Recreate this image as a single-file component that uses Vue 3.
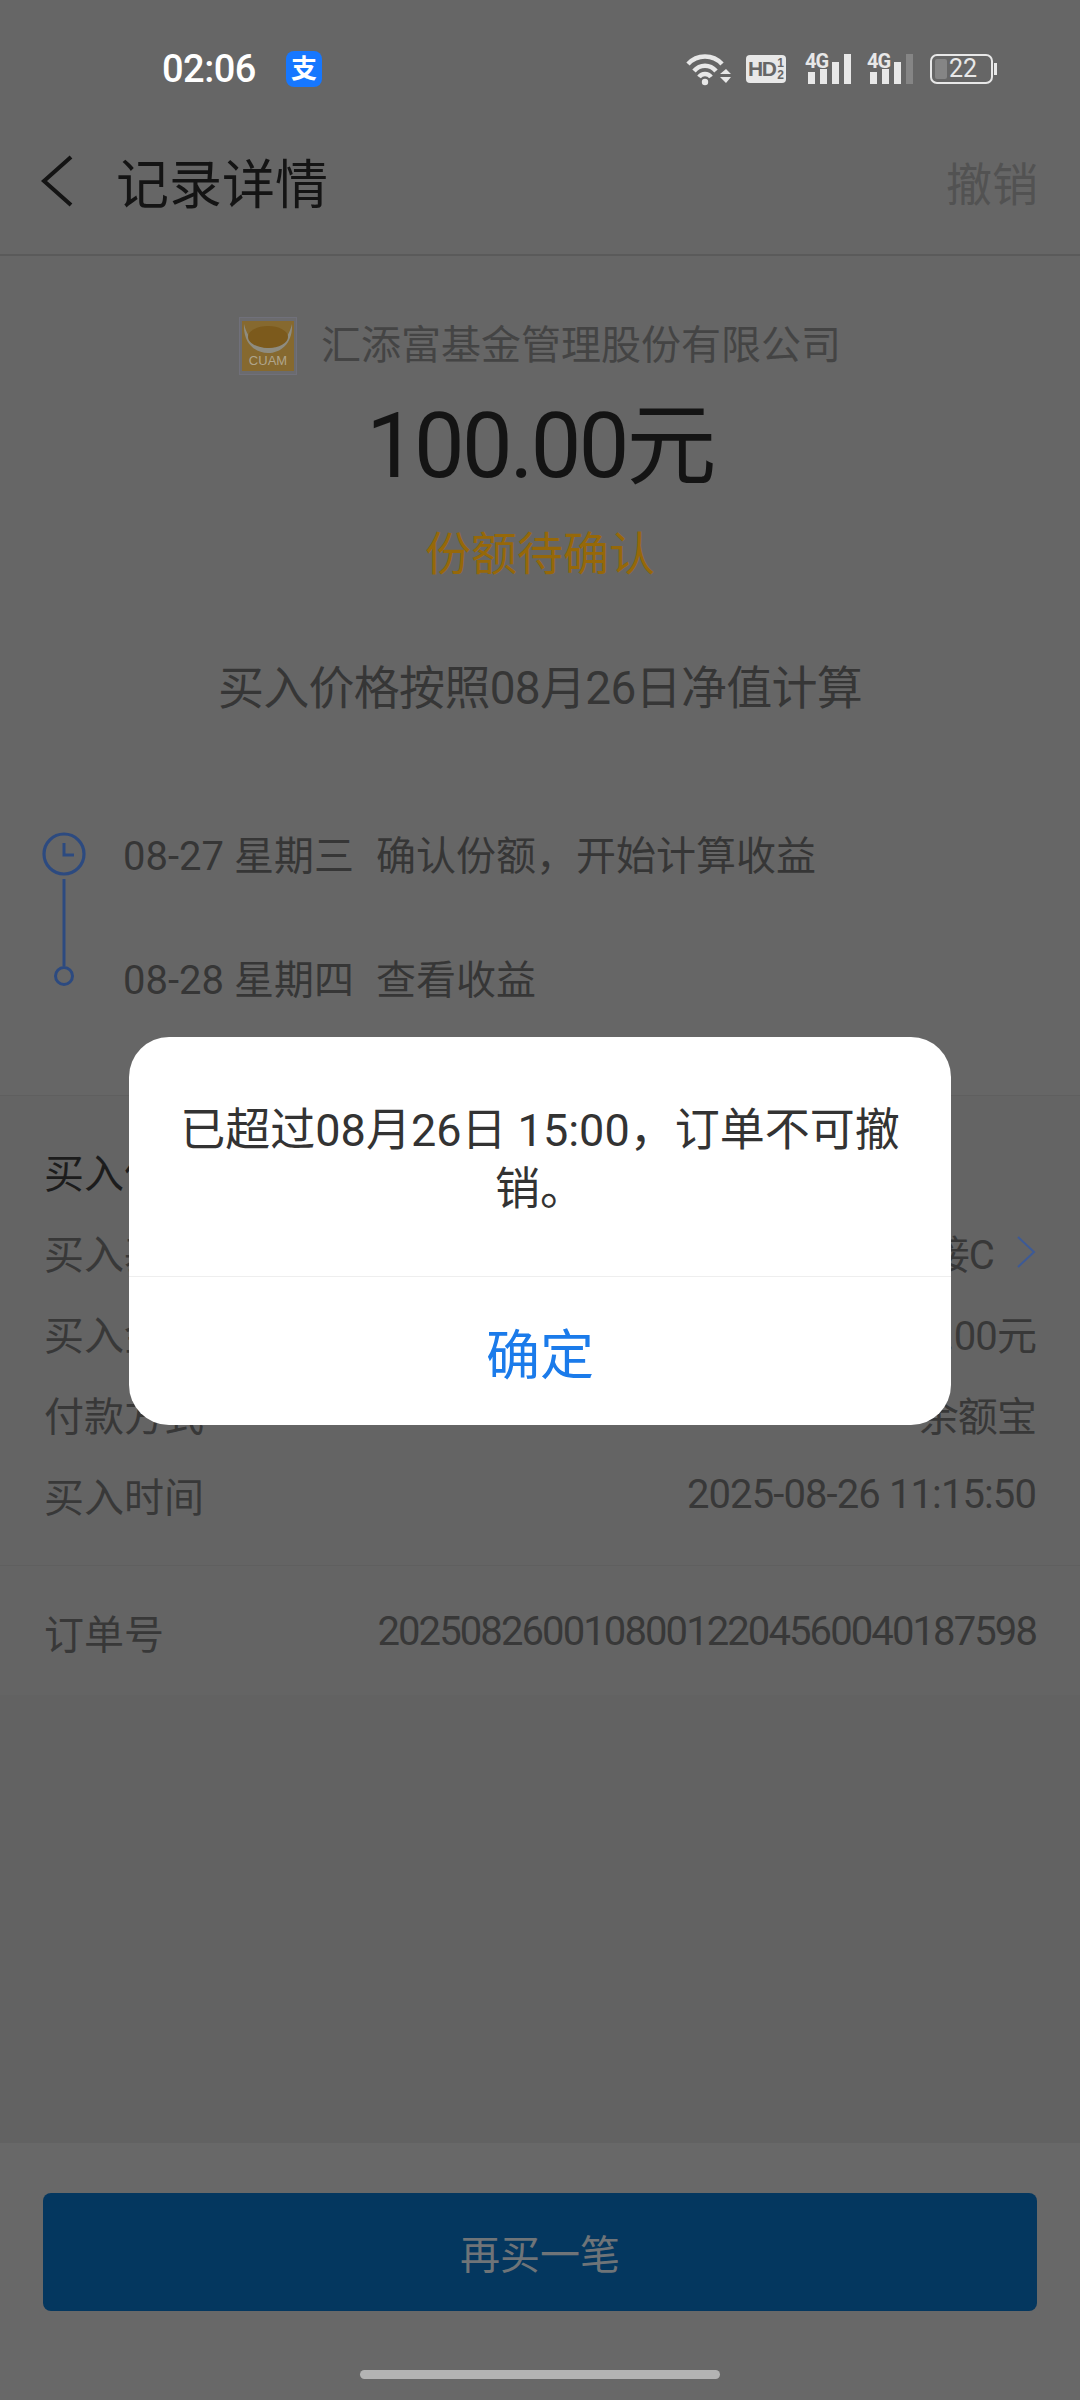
<template>
  <div class="page">
    <div class="status-bar">
      <span class="time">02:06</span>
      <span class="alipay-icon">支</span>
      <div class="status-icons">
        <svg class="wifi" width="46" height="34" viewBox="0 0 46 34">
          <path d="M2 12 C11 2 27 2 36 12" fill="none" stroke="#e8e8e8" stroke-width="4.5" />
          <path d="M8 19 C14 12 24 12 30 19" fill="none" stroke="#e8e8e8" stroke-width="4.5" />
          <path d="M13 25 C16 21 22 21 25 25" fill="none" stroke="#e8e8e8" stroke-width="4.5" />
          <circle cx="19" cy="30" r="3.2" fill="#e8e8e8" />
          <path d="M34 22 L40 17 L45 22 Z M34 25 L45 25 L40 31 Z" fill="#e8e8e8" />
        </svg>
        <div class="hd-badge"><span class="hd">HD</span><span class="hd-num"><i>1</i><i>2</i></span></div>
        <div class="signal">
          <span class="net">4G</span>
          <span class="bar" style="height: 12px"></span>
          <span class="bar" style="height: 15px"></span>
          <span class="bar" style="height: 22px"></span>
          <span class="bar" style="height: 30px"></span>
        </div>
        <div class="signal">
          <span class="net">4G</span>
          <span class="bar" style="height: 12px"></span>
          <span class="bar" style="height: 15px"></span>
          <span class="bar" style="height: 22px"></span>
          <span class="bar off" style="height: 30px"></span>
        </div>
        <div class="battery">
          <div class="battery-body"><span class="battery-fill"></span><span class="battery-num">22</span></div>
          <span class="battery-nub"></span>
        </div>
      </div>
    </div>

    <div class="nav">
      <svg class="back" width="34" height="52" viewBox="0 0 34 52">
        <path d="M31 2 L4 26 L31 50" fill="none" stroke="#141414" stroke-width="4" />
      </svg>
      <span class="nav-title">记录详情</span>
      <span class="nav-action">撤销</span>
    </div>

    <div class="summary">
      <div class="company">
        <svg class="logo" width="58" height="58" viewBox="0 0 58 58">
          <rect x="0.5" y="0.5" width="57" height="57" fill="#6b6b6e" stroke="#70707a" />
          <rect x="3" y="4" width="52" height="50" fill="#86692f" />
          <path d="M5 7 C4 26 16 36 29 36 C42 36 54 26 53 7 C50 20 41 31 29 31 C17 31 8 20 5 7 Z" fill="#8e8c80" />
          <ellipse cx="29" cy="20" rx="20" ry="11" fill="#7c5a1c" />
          <text x="29" y="48" text-anchor="middle" class="logo-text">CUAM</text>
        </svg>
        <span>汇添富基金管理股份有限公司</span>
      </div>
      <div class="amount">100.00元</div>
      <div class="state">份额待确认</div>
      <div class="price-note">买入价格按照08月26日净值计算</div>
    </div>

    <div class="timeline">
      <div class="track">
        <svg width="44" height="156" viewBox="0 0 44 156">
          <circle cx="22" cy="22" r="20" fill="none" stroke="#2c4a80" stroke-width="3.2" />
          <path d="M22 11 V23 H32" fill="none" stroke="#2c4a80" stroke-width="3" />
          <path d="M22 47 V134" fill="none" stroke="#2c4a80" stroke-width="3" />
          <circle cx="22" cy="144" r="8.5" fill="none" stroke="#2c4a80" stroke-width="3" />
        </svg>
      </div>
      <div class="steps">
        <div class="step" v-for="step in steps" :key="step.date">
          <span class="step-date">{{ step.date }}</span>
          <span class="step-text">{{ step.text }}</span>
        </div>
      </div>
    </div>

    <div class="section info">
      <div class="info-title">买入信息</div>
      <div class="row" v-for="row in rows" :key="row.label">
        <span class="row-label">{{ row.label }}</span>
        <span class="row-value">
          {{ row.value }}
          <svg v-if="row.link" class="more" width="20" height="32" viewBox="0 0 20 32">
            <path d="M2 1 L18 16 L2 31" fill="none" stroke="#3d5a96" stroke-width="2" />
          </svg>
        </span>
      </div>
    </div>

    <div class="section order">
      <span class="row-label">订单号</span>
      <span class="row-value">20250826001080012204560040187598</span>
    </div>

    <div class="spacer"></div>

    <div class="footer">
      <button class="buy-again">再买一笔</button>
      <div class="home-bar"></div>
    </div>

    <div class="modal-overlay">
      <div class="modal">
        <div class="modal-text">已超过08月26日 15:00，订单不可撤销。</div>
        <div class="modal-btn">确定</div>
      </div>
    </div>
  </div>
</template>

<script setup>
const steps = [
  { date: "08-27 星期三", text: "确认份额，开始计算收益" },
  { date: "08-28 星期四", text: "查看收益" },
];

const rows = [
  { label: "买入基金", value: "联接C", link: true },
  { label: "买入金额", value: "100.00元" },
  { label: "付款方式", value: "余额宝" },
  { label: "买入时间", value: "2025-08-26 11:15:50" },
];
</script>

<style>
html,
body {
  margin: 0;
  background: #666666;
}
</style>

<style scoped>
.page {
  position: relative;
  width: 1080px;
  height: 2400px;
  display: flex;
  flex-direction: column;
  background: #666666;
  font-family: Roboto, "Noto Sans CJK SC", sans-serif;
  overflow: hidden;
}

.status-bar {
  height: 62px;
  padding: 38px 83px 0 162px;
  display: flex;
  align-items: center;
  color: #ffffff;
}

.time {
  font-size: 38px;
  font-weight: 500;
  letter-spacing: -0.5px;
  width: 124px;
}

.alipay-icon {
  width: 36px;
  height: 36px;
  border-radius: 8px;
  background: #1677ff;
  font-size: 26px;
  font-weight: 700;
  line-height: 36px;
  text-align: center;
}

.status-icons {
  margin-left: auto;
  display: flex;
  align-items: center;
}

.wifi {
  margin-right: 14px;
}

.hd-badge {
  width: 40px;
  height: 28px;
  border-radius: 4px;
  background: #e8e8e8;
  color: #666666;
  display: flex;
  align-items: center;
  justify-content: center;
  margin-right: 20px;
  font-family: "Liberation Sans", sans-serif;
  font-weight: 700;
}

.hd {
  font-size: 21px;
  letter-spacing: -1.5px;
}

.hd-num {
  display: flex;
  flex-direction: column;
  margin-left: 2px;
  font-size: 12px;
  line-height: 12px;
}

.hd-num i {
  font-style: normal;
}

.signal {
  position: relative;
  width: 44px;
  height: 30px;
  margin-right: 16px;
  display: flex;
  align-items: flex-end;
  gap: 5px;
  padding-left: 2px;
}

.net {
  position: absolute;
  top: -2px;
  left: -1px;
  font-size: 20px;
  line-height: 18px;
  font-weight: 700;
  color: #e8e8e8;
  letter-spacing: -1px;
}

.bar {
  width: 7px;
  background: #e8e8e8;
}

.bar.off {
  background: #858585;
}

.battery {
  display: flex;
  align-items: center;
}

.battery-body {
  position: relative;
  width: 63px;
  height: 30px;
  box-sizing: border-box;
  border: 2.5px solid #e8e8e8;
  border-radius: 7px;
  color: #e8e8e8;
  font-size: 25px;
  line-height: 25px;
}

.battery-fill {
  position: absolute;
  left: 3px;
  top: 3px;
  bottom: 3px;
  width: 12px;
  border-radius: 2px;
  background: #858585;
}

.battery-num {
  position: absolute;
  left: 17px;
  top: 0;
}

.battery-nub {
  width: 3px;
  height: 12px;
  margin-left: 1px;
  background: #e8e8e8;
}

.nav {
  height: 146px;
  padding: 8px 42px 0 40px;
  display: flex;
  align-items: center;
  border-bottom: 2px solid #5a5a5a;
}

.back {
  margin-right: 42px;
}

.nav-title {
  font-size: 53px;
  color: #141414;
}

.nav-action {
  margin-left: auto;
  font-size: 46px;
  color: #525252;
}

.summary {
  display: flex;
  flex-direction: column;
  align-items: center;
  padding-top: 61px;
}

.company {
  display: flex;
  align-items: center;
  gap: 24px;
  font-size: 40px;
  line-height: 58px;
  color: #444444;
}

.logo-text {
  font-family: "Liberation Sans", sans-serif;
  font-size: 13px;
  fill: #b0a58c;
}

.amount {
  margin-top: 22px;
  font-size: 90px;
  line-height: 100px;
  letter-spacing: -2.7px;
  color: #141414;
}

.state {
  margin-top: 27px;
  font-size: 46px;
  line-height: 60px;
  color: #966809;
}

.price-note {
  margin-top: 74px;
  font-size: 46px;
  line-height: 60px;
  letter-spacing: -0.7px;
  color: #363636;
}

.timeline {
  display: flex;
  margin-top: 109px;
  padding-left: 42px;
}

.track {
  width: 81px;
  height: 156px;
  padding-top: 5px;
}

.steps {
  display: flex;
  flex-direction: column;
  gap: 64px;
  font-size: 40px;
  line-height: 60px;
  color: #363636;
}

.step-date {
  margin-right: 22px;
}

.section {
  background: #646464;
  border-top: 1px solid #5f5f5f;
  padding: 0 44px;
}

.info {
  margin-top: 84px;
  height: 470px;
  box-sizing: border-box;
  padding-top: 56px;
}

.info-title {
  font-size: 40px;
  line-height: 46px;
  color: #1c1c1c;
  margin-bottom: 13px;
}

.row {
  height: 81px;
  display: flex;
  justify-content: space-between;
  align-items: center;
}

.row-label {
  font-size: 40px;
  color: #383838;
}

.row-value {
  font-size: 40px;
  letter-spacing: -0.9px;
  color: #383838;
  display: flex;
  align-items: center;
}

.more {
  margin-left: 22px;
}

.order {
  height: 130px;
  box-sizing: border-box;
  padding-top: 2px;
  display: flex;
  justify-content: space-between;
  align-items: center;
}

.order .row-value {
  letter-spacing: -1.9px;
}

.spacer {
  flex: 1;
  background: #626262;
}

.footer {
  height: 257px;
  box-sizing: border-box;
  background: #686868;
  padding: 50px 43px 0;
  display: flex;
  flex-direction: column;
  align-items: center;
}

.buy-again {
  width: 100%;
  height: 118px;
  border: none;
  border-radius: 8px;
  background: #04375f;
  color: #6f7478;
  font-family: inherit;
  font-size: 40px;
}

.home-bar {
  width: 360px;
  height: 9px;
  margin-top: 59px;
  border-radius: 5px;
  background: #b3b3b3;
}

.modal-overlay {
  position: absolute;
  inset: 0;
  display: flex;
  justify-content: center;
  align-items: flex-start;
  padding-top: 1037px;
  box-sizing: border-box;
}

.modal {
  width: 822px;
  height: 388px;
  background: #ffffff;
  border-radius: 40px;
  display: flex;
  flex-direction: column;
}

.modal-text {
  height: 240px;
  box-sizing: border-box;
  padding: 64px 44px 0;
  font-size: 45px;
  line-height: 59px;
  color: #333333;
  text-align: center;
  border-bottom: 1px solid #eeeeee;
}

.modal-btn {
  flex: 1;
  display: flex;
  align-items: center;
  justify-content: center;
  font-size: 54px;
  color: #1b7bea;
}
</style>
